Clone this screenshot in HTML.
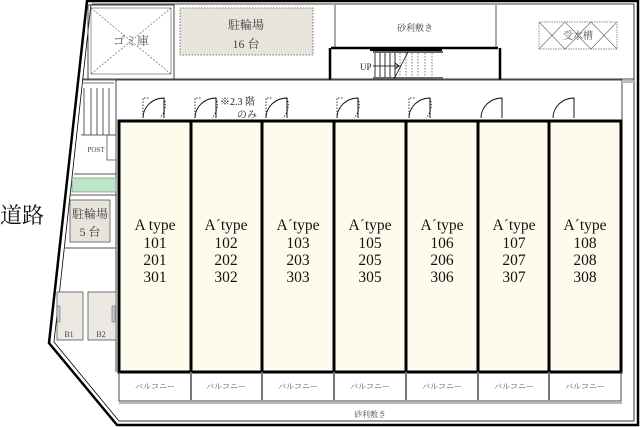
<!DOCTYPE html>
<html><head><meta charset="utf-8"><style>body{margin:0;background:#fff}svg{display:block}</style></head><body>
<svg width="640" height="427" viewBox="0 0 640 427" xmlns="http://www.w3.org/2000/svg" font-family="'Liberation Serif','Noto Serif CJK SC',serif">
<rect width="640" height="427" fill="#fff"/>
<path d="M87,1 L638,1 L638,425 L117,425 L49,343 Z" fill="none" stroke="#000" stroke-width="2.5"/>
<path d="M92,4 L634,4 L634,421 L119,421 L54,342 L91,4" fill="none" stroke="#000" stroke-width="0.8"/>
<line x1="82" y1="79" x2="634" y2="79" stroke="#444" stroke-width="1"/>
<rect x="88" y="5" width="86" height="74" fill="none" stroke="#444" stroke-width="1"/>
<rect x="91" y="8" width="80" height="66" fill="none" stroke="#555" stroke-width="0.6"/>
<path d="M91,8 L171,74 M171,8 L91,74" stroke="#555" stroke-width="0.6" stroke-dasharray="2,1.5"/>
<text x="131" y="45" font-size="12" text-anchor="middle" fill="#555">ゴミ庫</text>
<rect x="180" y="8" width="133" height="47" fill="#e8e4dc" stroke="#555" stroke-width="0.8" stroke-dasharray="1.5,1.5"/>
<text x="246" y="29" font-size="12" text-anchor="middle" fill="#444">駐輪場</text>
<text x="246" y="48" font-size="12" text-anchor="middle" fill="#444">16 台</text>
<line x1="335" y1="5" x2="335" y2="48" stroke="#555"/>
<line x1="496" y1="5" x2="496" y2="48" stroke="#555"/>
<text x="415" y="31" font-size="9" text-anchor="middle" fill="#444">砂利敷き</text>
<rect x="539" y="22" width="78" height="27" fill="none" stroke="#666" stroke-width="0.7" stroke-dasharray="1.5,1"/>
<path d="M539,22 L565,49 M565,22 L539,49 M591,22 L617,49 M617,22 L591,49 M565,22 L578,35 M591,22 L578,35 M565,49 L578,36 M591,49 L578,36" stroke="#666" stroke-width="0.6"/>
<text x="578" y="39" font-size="10" text-anchor="middle" fill="#555">受水槽</text>
<path d="M330,48 L330,80 M331,48 L498,48 M500,48 L500,80" stroke="#000" stroke-width="2.5" fill="none"/>
<rect x="370" y="48" width="72" height="3" fill="#000"/>
<rect x="373" y="51" width="70" height="2" fill="#666"/>
<rect x="373" y="77" width="70" height="2" fill="#666"/>
<path d="M375,53 V77 M380,53 V77 M385,53 V77 M390,53 V77 M395,53 V77" stroke="#000" stroke-width="0.8"/>
<path d="M400,53 V77 M406,53 V77 M412,53 V77 M418,53 V77 M425,53 V77 M432,53 V77" stroke="#444" stroke-width="0.7" stroke-dasharray="1.5,1.5"/>
<line x1="394" y1="79" x2="408" y2="52" stroke="#000" stroke-width="0.8"/>
<line x1="373" y1="66" x2="398" y2="66" stroke="#000" stroke-width="0.8"/>
<path d="M395,63 L399,66 L395,69" fill="none" stroke="#000" stroke-width="0.8"/>
<text x="360" y="70" font-size="9" fill="#222">UP</text>
<path d="M116,80 L622,80 L622,120" fill="none" stroke="#444" stroke-width="1"/>
<line x1="116" y1="80" x2="116" y2="372" stroke="#444" stroke-width="1"/>
<rect x="622" y="80" width="12" height="3" fill="#bbb"/>
<path d="M82,80 L116,80 M82,83 L114,83" stroke="#444" stroke-width="0.8"/>
<path d="M84,88 V135 M91,88 V135 M97,88 V135 M103,88 V135 M109,88 V135 M81,135 L116,135" stroke="#333" stroke-width="0.8"/>
<rect x="107" y="135" width="9" height="25" fill="none" stroke="#555" stroke-width="0.8"/>
<text x="96" y="152" font-size="7" text-anchor="middle" fill="#444">POST</text>
<line x1="74" y1="174" x2="116" y2="174" stroke="#555"/>
<rect x="72" y="178" width="44" height="14" fill="#bde6c8" stroke="#777" stroke-width="0.6"/>
<line x1="70" y1="195" x2="116" y2="195" stroke="#555"/>
<rect x="70" y="200" width="40" height="42" fill="#e8e4dc" stroke="#555" stroke-width="0.8"/>
<text x="90" y="218" font-size="12" text-anchor="middle" fill="#444">駐輪場</text>
<text x="90" y="236" font-size="12" text-anchor="middle" fill="#444">5 台</text>
<line x1="64" y1="248" x2="116" y2="248" stroke="#555"/>
<rect x="57" y="292" width="26" height="48" fill="#ece9e3" stroke="#555" stroke-width="0.8"/>
<rect x="88" y="292" width="28" height="48" fill="#ece9e3" stroke="#555" stroke-width="0.8"/>
<rect x="57" y="306" width="3" height="16" fill="#ccc" stroke="#555" stroke-width="0.5"/>
<rect x="112" y="306" width="3" height="16" fill="#ccc" stroke="#555" stroke-width="0.5"/>
<text x="69" y="337" font-size="8" text-anchor="middle" fill="#444">B1</text>
<text x="101" y="337" font-size="8" text-anchor="middle" fill="#444">B2</text>
<text x="0" y="223" font-size="22" fill="#111">道路</text>
<rect x="119" y="121" width="502" height="251" fill="#fdfbeb" stroke="#000" stroke-width="3"/>
<path d="M191,121 V372 M262,121 V372 M334,121 V372 M406,121 V372 M478,121 V372 M549,121 V372" stroke="#000" stroke-width="3"/>
<g fill="none" stroke="#000" stroke-width="0.9">
<path d="M164,118 V98 A21,20 0 0 0 143,118"/>
<path d="M216,118 V98 A21,20 0 0 0 195,118"/>
<path d="M287,118 V98 A21,20 0 0 0 266,118"/>
<path d="M358,118 V98 A21,20 0 0 0 337,118"/>
<path d="M430,118 V98 A21,20 0 0 0 409,118"/>
<path d="M502,118 V98 A21,20 0 0 0 481,118"/>
<path d="M574,118 V98 A21,20 0 0 0 553,118"/>
</g>
<g fill="none" stroke="#000" stroke-width="0.8" stroke-dasharray="1.5,1.5">
<path d="M143,118 V98 H150 M164,98 A21,20 0 0 1 160,118"/>
<path d="M195,118 V98 H202 M216,98 A21,20 0 0 1 212,118"/>
<path d="M266,118 V98 H273 M287,98 A21,20 0 0 1 283,118"/>
<path d="M337,118 V98 H344 M358,98 A21,20 0 0 1 354,118"/>
<path d="M409,118 V98 H416 M430,98 A21,20 0 0 1 426,118"/>
</g>
<text x="220" y="105" font-size="10" fill="#222">※2.3 階</text>
<text x="237" y="118" font-size="10" fill="#222">のみ</text>
<g font-size="15.5" text-anchor="middle" fill="#111">
<text x="155" y="230">A type</text><text x="155" y="248">101</text><text x="155" y="265">201</text><text x="155" y="282">301</text>
<text x="226" y="230">A´type</text><text x="226" y="248">102</text><text x="226" y="265">202</text><text x="226" y="282">302</text>
<text x="298" y="230">A´type</text><text x="298" y="248">103</text><text x="298" y="265">203</text><text x="298" y="282">303</text>
<text x="370" y="230">A´type</text><text x="370" y="248">105</text><text x="370" y="265">205</text><text x="370" y="282">305</text>
<text x="442" y="230">A´type</text><text x="442" y="248">106</text><text x="442" y="265">206</text><text x="442" y="282">306</text>
<text x="514" y="230">A´type</text><text x="514" y="248">107</text><text x="514" y="265">207</text><text x="514" y="282">307</text>
<text x="585" y="230">A´type</text><text x="585" y="248">108</text><text x="585" y="265">208</text><text x="585" y="282">308</text>
</g>
<path d="M119,372 V401 H621 V372" fill="none" stroke="#444" stroke-width="1"/>
<path d="M191,372 V400 M262,372 V400 M334,372 V400 M406,372 V400 M478,372 V400 M549,372 V400" stroke="#777" stroke-width="2"/>
<line x1="119" y1="403" x2="622" y2="403" stroke="#444" stroke-width="0.8"/>
<g font-size="8" text-anchor="middle" fill="#555">
<text x="155" y="389">バルコニー</text><text x="226" y="389">バルコニー</text><text x="298" y="389">バルコニー</text><text x="370" y="389">バルコニー</text><text x="442" y="389">バルコニー</text><text x="514" y="389">バルコニー</text><text x="585" y="389">バルコニー</text>
</g>
<text x="370" y="417" font-size="8" text-anchor="middle" fill="#555">砂利敷き</text>
</svg>
</body></html>
